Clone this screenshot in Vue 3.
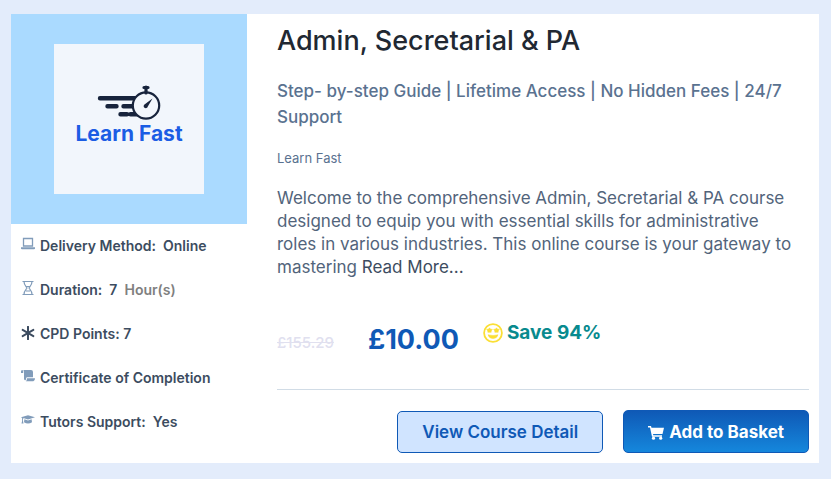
<script setup>
const stars = [0, 60, 120]
</script>

<template>
  <main class="page">
    <article class="card">
      <aside class="side">
        <div class="banner">
          <div class="logo">
            <svg class="watch" viewBox="0 0 64 36" aria-hidden="true">
              <g stroke="#17233c" stroke-width="4.4" stroke-linecap="round" fill="none">
                <path d="M3 13.3H38M10.500 21.300H19.500M26.500 21.300H36M23.500 29.300H30M33.500 29.300H41" />
              </g>
              <circle cx="49" cy="20.500" r="13.200" fill="#f2f6fc" stroke="#17233c" stroke-width="2.200" />
              <path d="M47 2.500H51M49 2V8" stroke="#17233c" stroke-width="3.200" stroke-linecap="round" />
              <path d="M55.500 13.500L50.800 21.500A2.100 2.100 0 1 1 47.800 19.200Z" fill="#17233c" />
            </svg>
            <span class="brand">Learn Fast</span>
          </div>
        </div>
        <ul class="facts">
          <li>
            <svg class="icon" viewBox="0 0 14 14" aria-hidden="true">
              <path d="M2.500 1.500H11.500V9H2.500Z" fill="none" stroke="#819cba" stroke-width="1.300" />
              <path d="M0 10.300H14V11.500Q14 12.300 13 12.300H1Q0 12.300 0 11.500Z" fill="#819cba" />
            </svg>
            <span>Delivery Method:&nbsp; Online</span>
          </li>
          <li>
            <svg class="icon tall" viewBox="0 0 14 16" aria-hidden="true">
              <path d="M1.500 1.500H12.500M1.500 14.500H12.500M3 1.500C3 5 4.500 6 6 8C4.500 10 3 11 3 14.500M11 1.500C11 5 9.500 6 8 8C9.500 10 11 11 11 14.500M5 6.500H9M5 11H9" fill="none" stroke="#819cba" stroke-width="1.200" />
            </svg>
            <span>Duration:&nbsp; 7&nbsp; <span class="muted">Hour(s)</span></span>
          </li>
          <li>
            <svg class="icon star" viewBox="0 0 14 14" aria-hidden="true">
              <path v-for="a in stars" :key="a" d="M7 .8V13.200" :transform="`rotate(${a} 7 7)`" stroke="#3c4c60" stroke-width="2" stroke-linecap="round" />
            </svg>
            <span>CPD Points: 7</span>
          </li>
          <li>
            <svg class="icon" viewBox="0 0 14 14" aria-hidden="true">
              <path d="M2.300 1H10Q12 1 12 3V8.300H6Q5 8.300 5 10Q5 11.600 4 11.300Q3 11 3 9.500V3Q3 1.800 2.300 1ZM0 2.500Q0 1 1.100 1Q2.200 1 2.200 2.500V4H0ZM6 9.200H14Q14 12.300 11 12.300H4.800Q6 11.500 6 9.200Z" fill="#819cba" />
            </svg>
            <span>Certificate of Completion</span>
          </li>
          <li>
            <svg class="icon" viewBox="0 0 14 14" aria-hidden="true">
              <path d="M0 4.200L7 2.200L14 4.200L7 6.400L3 5.200L2 5.600V8L2.500 10.500H.5L1.100 8V4.900ZM3.400 6.300L7 7.400L10.600 6.300L11 9.300Q7 11.800 3 9.300Z" fill="#819cba" />
            </svg>
            <span>Tutors Support:&nbsp; Yes</span>
          </li>
        </ul>
      </aside>

      <section class="details">
        <h1>Admin, Secretarial &amp; PA</h1>
        <h2>Step- by-step Guide | Lifetime Access | No Hidden Fees | 24/7 Support</h2>
        <p class="vendor">Learn Fast</p>
        <p class="summary">
          Welcome to the comprehensive Admin, Secretarial &amp; PA course
          designed to equip you with essential skills for administrative
          roles in various industries. This online course is your gateway to
          mastering <a href="#">Read More...</a>
        </p>
        <div class="prices">
          <del>£155.29</del>
          <strong class="price">£10.00</strong>
          <span class="save">
            <svg class="smile" viewBox="0 0 20 20" aria-hidden="true">
              <circle cx="10" cy="10" r="8.900" fill="none" stroke="#fbdf35" stroke-width="1.800" />
              <path d="M6.500 4.800L7.400 6.100L9.400 6.400L8.200 7.900L8.200 9.300H4.800L4.800 7.900L3.600 6.400L5.600 6.100ZM13.500 4.800L14.400 6.100L16.400 6.400L15.200 7.900L15.200 9.300H11.800L11.800 7.900L10.600 6.400L12.600 6.100ZM5 11.800Q10 13.200 15 11.800Q14 15.600 10 15.600Q6 15.600 5 11.800Z" fill="#fbdf35" stroke="#fbdf35" stroke-width=".5" stroke-linejoin="round" />
            </svg>
            Save 94%
          </span>
        </div>
        <div class="actions">
          <button type="button" class="view">View Course Detail</button>
          <button type="button" class="add">
            <svg class="cart" viewBox="0 0 16 14" aria-hidden="true">
              <path d="M0 0H3L3.500 1.700H16L14.500 8H5L5.300 9.300H14V10.700H4L2 1.400H0Z" fill="#fff" />
              <circle cx="5.500" cy="12.200" r="1.600" fill="#fff" />
              <circle cx="12.700" cy="12.200" r="1.600" fill="#fff" />
            </svg>
            Add to Basket
          </button>
        </div>
      </section>
    </article>
  </main>
</template>

<style>
body {
  background: #e3ecfb;
}
</style>

<style scoped>
.page {
  padding: 14px 12px 16px 11px;
  font-family: Inter, "Liberation Sans", sans-serif;
  color: #3c4c60;
}
.card {
  display: grid;
  grid-template-columns: 236px minmax(0, 1fr);
  background: #fff;
}
.banner {
  display: grid;
  place-items: center;
  padding: 30px 0;
  background: #aadaff;
}
.logo {
  box-sizing: border-box;
  display: flex;
  flex-direction: column;
  align-items: center;
  width: 150px;
  height: 150px;
  padding-top: 41px;
  background: #f2f6fc;
}
.watch {
  width: 64px;
  height: 36px;
}
.brand {
  font-size: 21px;
  line-height: 26px;
  font-weight: 700;
  color: #1b5de4;
}
.facts {
  margin: 0;
  padding: 0 10px;
  list-style: none;
  font-size: 14px;
  line-height: 16px;
  font-weight: 600;
}
.facts li {
  display: flex;
  align-items: center;
  gap: 5px;
  height: 44px;
  white-space: nowrap;
}
.icon {
  flex: none;
  width: 14px;
  height: 14px;
  margin-bottom: 4px;
}
.tall {
  height: 16px;
}
.star {
  margin-bottom: 2px;
}
.muted {
  color: #808080;
}
.details {
  padding: 11px 10px 10px 30px;
}
h1,
h2,
p {
  margin: 0;
}
h1 {
  font-size: 27px;
  line-height: 32px;
  font-weight: 500;
  color: #212832;
}
h2 {
  margin-top: 21px;
  font-size: 17px;
  line-height: 26px;
  font-weight: 500;
  color: #5a7290;
}
.vendor {
  margin-top: 18px;
  font-size: 13px;
  line-height: 20px;
  color: #5a7290;
}
.summary {
  margin-top: 19px;
  padding-right: 12px;
  font-size: 17px;
  line-height: 23px;
  color: #52647b;
}
.summary a {
  color: #3c4c60;
  text-decoration: none;
}
.prices {
  display: flex;
  align-items: flex-start;
  margin-top: 42px;
  padding-bottom: 34px;
  border-bottom: 1px solid #d1dce6;
}
del {
  padding-top: 12px;
  font-size: 15px;
  line-height: 20px;
  font-weight: 500;
  color: #e0e0ef;
}
.price {
  margin-left: 34px;
  padding-top: 4px;
  font-size: 27px;
  line-height: 30px;
  font-weight: 700;
  color: #0f59b6;
}
.save {
  display: flex;
  align-items: center;
  gap: 4px;
  margin-left: 24px;
  font-size: 19px;
  line-height: 24px;
  font-weight: 700;
  color: #088a8e;
}
.smile {
  width: 20px;
  height: 20px;
}
.actions {
  display: flex;
  justify-content: flex-end;
  align-items: flex-end;
  gap: 20px;
  margin-top: 20px;
}
button {
  display: flex;
  align-items: center;
  justify-content: center;
  height: 42px;
  padding: 0 24px;
  border: 1px solid #0f59b6;
  border-radius: 5px;
  font-family: inherit;
  font-size: 17px;
  font-weight: 600;
  white-space: nowrap;
}
.view {
  background: #d0e4ff;
  color: #0f59b6;
}
.add {
  gap: 5px;
  height: 43px;
  background: linear-gradient(#0f59b6, #1587dc);
  color: #fff;
  font-weight: 700;
}
.cart {
  width: 16px;
  height: 14px;
  margin-top: 3px;
}
</style>
